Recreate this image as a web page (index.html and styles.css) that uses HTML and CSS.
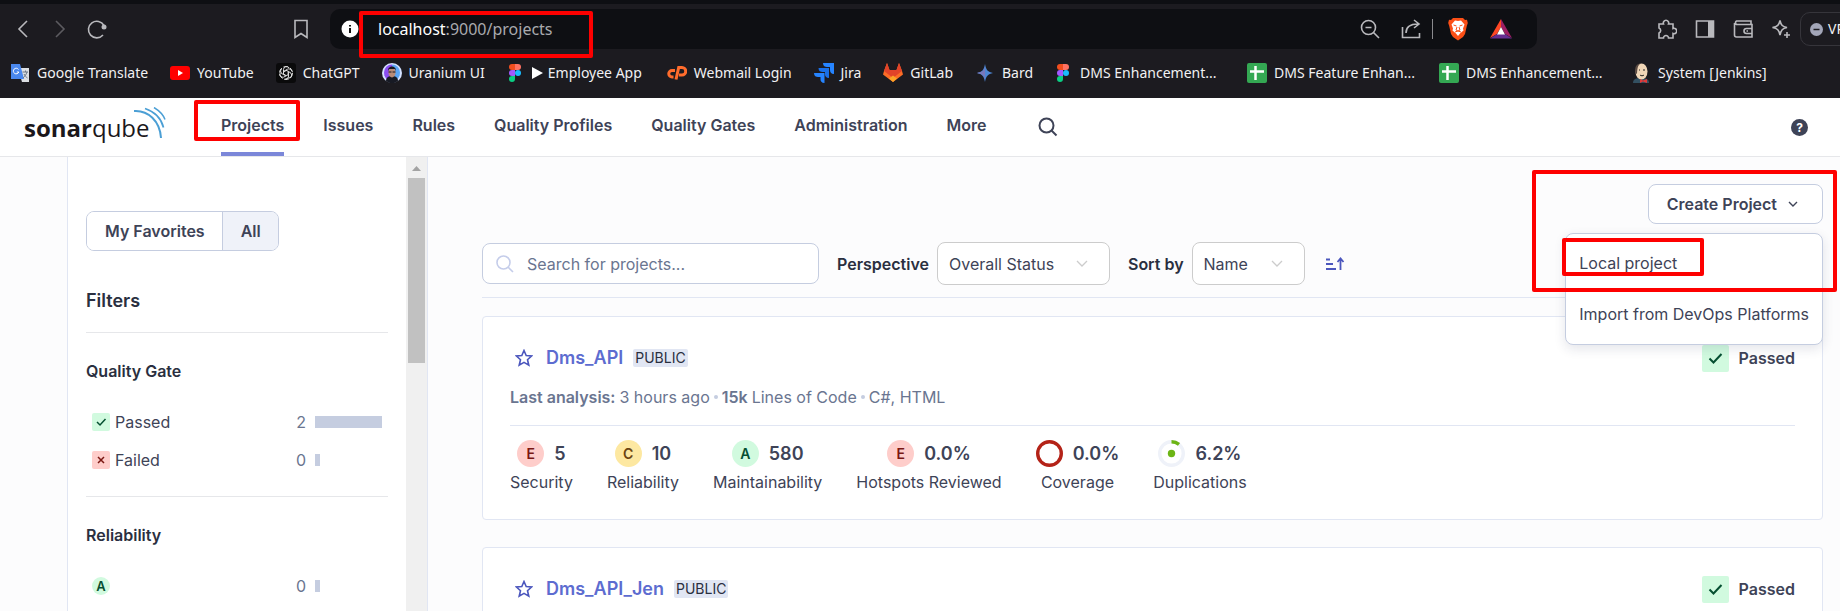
FILE: index.html
```html
<!DOCTYPE html>
<html lang="en">
<head>
<meta charset="utf-8">
<title>Projects</title>
<link rel="stylesheet" href="styles.css">
</head>
<body>
<div class="browser">
  <div class="toolbar">
    <div class="nav-buttons">
      <button class="icon-btn" aria-label="Back"><svg width="20" height="22" viewBox="0 0 20 22"><path d="M14 3 6 11l8 8" class="line"/></svg></button>
      <button class="icon-btn dim" aria-label="Forward"><svg width="20" height="22" viewBox="0 0 20 22"><path d="m6 3 8 8-8 8" class="line"/></svg></button>
      <button class="icon-btn" aria-label="Reload"><svg width="20" height="22" viewBox="0 0 20 22"><path d="M16 17A8.300 8.300 0 1 1 17 7.500" class="line"/><circle cx="17" cy="9" r="2.500" fill="currentColor"/></svg></button>
    </div>
    <button class="icon-btn mark" aria-label="Bookmark"><svg width="16" height="20" viewBox="0 0 16 20"><path d="M2 1.500h12v17l-6-4-6 4z" class="line"/></svg></button>
    <div class="address">
      <svg width="18" height="18" viewBox="0 0 18 18"><circle cx="9" cy="9" r="8.500" fill="#fff"/><path d="M9 8v5M9 5v1.500" stroke="#111" stroke-width="2"/></svg>
      <div class="url marked"><span class="host">localhost</span>:9000/projects</div>
      <div class="address-tools">
        <button class="icon-btn" aria-label="Zoom"><svg width="20" height="20" viewBox="0 0 20 20"><circle cx="8.500" cy="8.500" r="7" class="line"/><path d="M5.500 8.500h6M13.500 13.500l5.500 5.500" class="line"/></svg></button>
        <button class="icon-btn" aria-label="Share"><svg width="20" height="20" viewBox="0 0 20 20"><path d="M1.500 8v10.500h17V14M5 14c0-6 4-9 12-9M13 1l5 4-5 4" class="line"/></svg></button>
        <span class="divider"></span>
        <button class="icon-btn" aria-label="Shields"><svg width="20" height="24" viewBox="0 0 20 24"><path d="M5 1h10l2 2 2-.3.800 3.300-1 3-1.800 8-2 3-5 3.500L5 20l-2-3L1.200 9l-1-3L1 2.700 3 3z" fill="#fb4f16"/><path d="m10 4 3-.5 3.500 4-1.500 4 .5 2-3.500 3L10 19l-2-2.500-3.500-3 .5-2-1.500-4 3.500-4z" fill="#fff"/><path d="m5.500 8 3 1M14.500 8l-3 1M9 10l-1 3 2 1 2-1-1-3M7 15l3-1 3 1" stroke="#fb4f16" fill="none"/></svg></button>
        <button class="icon-btn" aria-label="Rewards"><svg width="24" height="20" viewBox="0 0 24 20"><path d="M12 0 1 19l7-4 4-7z" fill="#ff4724"/><path d="m12 0 11 19-7-4-4-7z" fill="#9e1f63"/><path d="M1 19.500h22L16 15H8z" fill="#662d91"/><path d="m12 8 4 7.500H8z" fill="#fff"/></svg></button>
      </div>
    </div>
    <div class="extensions">
      <button class="icon-btn" aria-label="Extensions"><svg width="20" height="20" viewBox="0 0 20 20"><path d="M2 5h4.500a2.700 2.700 0 1 1 5 0H16v4.500a2.700 2.700 0 1 1 0 5V19h-4.500a2.500 2.500 0 1 0-5 0H2v-5a2.700 2.700 0 0 0 0-5z" class="line"/></svg></button>
      <button class="icon-btn" aria-label="Sidebar"><svg width="20" height="20" viewBox="0 0 20 20"><path d="M1.500 2h17v16h-17z" class="line"/><path d="M13 2h6v16h-6z" fill="currentColor"/></svg></button>
      <button class="icon-btn" aria-label="Wallet"><svg width="20" height="20" viewBox="0 0 20 20"><path d="M18 5.500V2H3.500a2 2 0 0 0 0 3.500H19V18H3.500A2 2 0 0 1 1.500 16V4M19 9.500h-5.500a2 2 0 0 0 0 5H19M13.500 12h1.500" class="line"/></svg></button>
      <button class="icon-btn" aria-label="Assistant"><svg width="20" height="20" viewBox="0 0 20 20"><path d="M9 1.500c1 4.500 2 6 7 7-4.500 1-6 2.500-7 7.500-1-5-2.500-6.500-7.500-7.500 5-1 6.500-2.500 7.500-7zM16 13v6M13 16h6" class="line"/></svg></button>
      <button class="vpn"><svg width="13" height="13" viewBox="0 0 13 13"><circle cx="6.500" cy="6.500" r="6.500" fill="#a3a6b8"/><path d="M3.500 6.500h6" stroke="#1c1b20" stroke-width="1.500"/></svg>VPN</button>
    </div>
  </div>
  <nav class="bookmarks" aria-label="Bookmarks">
    <a href="#"><svg width="20" height="20" viewBox="0 0 20 20"><path d="M8 5h11v14H12z" fill="#dcdfe3"/><path d="M1 1h9l4 15H1z" fill="#4a88ee"/><path d="M8.500 6.500a2.800 2.800 0 1 0 .3 2.500H6.800" class="glyph"/><path d="M12.500 9H18M15.500 7.500V9M17 9c-1 3-2 4-4 6M14 11c1 2 2 3 3.500 4" class="glyph gray"/></svg>Google Translate</a>
    <a href="#"><svg width="20" height="20" viewBox="0 0 20 20"><rect y="3" width="20" height="14" rx="3" fill="#f00"/><path d="m8 7 5 3-5 3z" fill="#fff"/></svg>YouTube</a>
    <a href="#"><svg width="20" height="20" viewBox="0 0 20 20"><rect width="20" height="20" rx="3" fill="#0a0a0b"/><g fill="none" stroke="#ddd"><path id="petal" d="M10 12.500 7.500 11V6.500a3 3 0 0 1 5.500-1.500M7.500 8.500l4-2.300a3 3 0 0 1 4.300 2"/><use href="#petal" transform="rotate(120 10 10)"/><use href="#petal" transform="rotate(240 10 10)"/><circle cx="10" cy="10" r="6.500" stroke-dasharray="5 1.800"/></g></svg>ChatGPT</a>
    <a href="#"><svg width="20" height="20" viewBox="0 0 20 20"><circle cx="10" cy="10" r="10" fill="#d5e2ff"/><path d="M10 1.500a8 8 0 0 0-8 8c0 4 2 6 4 7.500l4-2z" fill="#8a4df0"/><path d="M10 1.500a8 8 0 0 1 8 8c0 4-2 6-4 7.500l-4-2z" fill="#5aa5f5"/><path d="M4 18c0-4 3-5 6-5s6 1 6 5a10 10 0 0 1-12 0z" fill="#171a24"/><ellipse cx="10" cy="9.500" rx="3.500" ry="5" fill="#b98c78"/><path d="M6 8c-.5-6 8.500-6 8 0l-1-2H7z" fill="#181820"/><path d="M6.500 9h3M10.500 9h3" stroke="#181820"/></svg>Uranium UI</a>
    <a href="#" class="narrow"><svg width="14" height="20" viewBox="0 0 14 20"><path d="M7 1H4a3 3 0 0 0 0 6h3z" fill="#f24e1e"/><path d="M7 1h3a3 3 0 0 1 0 6H7z" fill="#ff7262"/><path d="M7 7H4a3 3 0 0 0 0 6h3z" fill="#a259ff"/><circle cx="10" cy="10" r="3" fill="#1abcfe"/><path d="M7 13H4a3 3 0 1 0 3 3z" fill="#0acf83"/></svg><span class="play"></span>Employee App</a>
    <a href="#"><svg width="20" height="20" viewBox="0 0 20 20"><path d="M8 7.500H5a3.200 3.200 0 0 0 0 6.500h1.500M9 16.500l2.700-12H15a3.500 3.500 0 0 1 0 7.500h-3" fill="none" stroke="#ff6c2c" stroke-width="3"/></svg>Webmail Login</a>
    <a href="#"><svg width="20" height="20" viewBox="0 0 20 20"><path d="M9 0h11v11c-3 0-4-2-4-4V4h-3c-2 0-4-1-4-4z" fill="#2684ff"/><path d="M4.500 5h10.500v10c-3 0-4-2-4-3.500V9H8.500c-2 0-4-1-4-4z" fill="#1a70e8"/><path d="M0 10h10.500v10c-3 0-4-2-4-3.500V14H4c-2 0-4-1-4-4z" fill="#2684ff"/></svg>Jira</a>
    <a href="#"><svg width="20" height="20" viewBox="0 0 20 20"><path d="M10 19 0 11.500 1 8l3-8 2.500 7h7L16 0l3 8 1 3.500z" fill="#fc6d26"/><path d="M1 8l3-8 2.500 7h7L16 0l3 8-9 7z" fill="#e24329"/><path d="m10 19-4-3.500 4-3 4 3z" fill="#fca326"/></svg>GitLab</a>
    <a href="#"><svg width="20" height="20" viewBox="0 0 20 20"><path d="M10 1c1 6 3 8 8 9-5 1-7 3-8 9-1-6-3-8-8-9 5-1 7-3 8-9z" fill="#4d87d5"/><path d="M10 4v12c-1-4-3-5-8-6 5-1 7-2 8-6z" fill="#7878bd"/></svg>Bard</a>
    <a href="#" class="narrow clipped"><svg width="14" height="20" viewBox="0 0 14 20"><path d="M7 1H4a3 3 0 0 0 0 6h3z" fill="#f24e1e"/><path d="M7 1h3a3 3 0 0 1 0 6H7z" fill="#ff7262"/><path d="M7 7H4a3 3 0 0 0 0 6h3z" fill="#a259ff"/><circle cx="10" cy="10" r="3" fill="#1abcfe"/><path d="M7 13H4a3 3 0 1 0 3 3z" fill="#0acf83"/></svg>DMS Enhancement...</a>
    <a href="#" class="clipped"><svg width="20" height="20" viewBox="0 0 20 20"><rect width="20" height="20" rx="2" fill="#34a853"/><path d="M3 8.500h14M8.500 3v14" stroke="#fff" stroke-width="2.500"/></svg>DMS Feature Enhan...</a>
    <a href="#" class="clipped"><svg width="20" height="20" viewBox="0 0 20 20"><rect width="20" height="20" rx="2" fill="#34a853"/><path d="M3 8.500h14M8.500 3v14" stroke="#fff" stroke-width="2.500"/></svg>DMS Enhancement...</a>
    <a href="#"><svg width="20" height="20" viewBox="0 0 20 20"><path d="M2 20c0-4 3-5 8-5s8 1 8 5z" fill="#335061"/><ellipse cx="10.500" cy="8.500" rx="6" ry="8" fill="#f0d6b7"/><path d="M4.500 11C3 3 6 0 11 .5 7 1 6.500 4 6 10.500z" fill="#5a4a42"/><path d="M8 7h1M12 7h2M9 12c1 1 3 1 4 0" stroke="#222" fill="none"/><path d="m9 16 3 1.500 4-1.500v4l-4-1.500L9 20z" fill="#e03a3a"/></svg>System [Jenkins]</a>
  </nav>
</div>

<header class="topbar">
  <a class="logo" href="#" aria-label="sonarqube"><span class="logo-text"><b>sonar</b>qube</span><svg width="32" height="32" viewBox="0 0 32 32"><g fill="none" stroke="#4b9fd5"><path d="M0 4c14-1 26 10 27 27" stroke-width="2"/><path d="M11 1.500c9 3 16 9 18.500 19" stroke-width="1.700"/><path d="M20 .5c5 3 9 6.500 11 12" stroke-width="1.500"/></g></svg></a>
  <nav class="main-nav" aria-label="Main">
    <a href="#" class="active marked">Projects</a>
    <a href="#">Issues</a>
    <a href="#">Rules</a>
    <a href="#">Quality Profiles</a>
    <a href="#">Quality Gates</a>
    <a href="#">Administration</a>
    <a href="#">More</a>
  </nav>
  <button class="top-search" aria-label="Search"><svg width="20" height="20" viewBox="0 0 20 20"><circle cx="8.500" cy="8.500" r="7" fill="none" stroke="currentColor" stroke-width="2"/><path d="m13.500 13.500 5 5" stroke="currentColor" stroke-width="2"/></svg></button>
  <button class="help" aria-label="Help">?</button>
</header>

<div class="page">
  <aside class="sidebar">
    <div class="filters">
      <div class="toggle"><button>My Favorites</button><button class="on">All</button></div>
      <h2>Filters</h2>
      <section>
        <h3>Quality Gate</h3>
        <div class="facet"><svg width="18" height="18" viewBox="0 0 18 18"><rect width="18" height="18" rx="2" fill="#d1fadf"/><path d="m5 9 3 3 5.500-6" fill="none" stroke="#054f31" stroke-width="1.500"/></svg><span>Passed</span><span class="count">2</span><span class="track"><i class="bar" style="width:100%"></i></span></div>
        <div class="facet"><svg width="18" height="18" viewBox="0 0 18 18"><rect width="18" height="18" rx="2" fill="#fecdca"/><path d="m6 6 6 6m0-6-6 6" stroke="#7a1712" stroke-width="1.500"/></svg><span>Failed</span><span class="count">0</span><span class="track"><i class="bar" style="width:0"></i></span></div>
      </section>
      <section>
        <h3>Reliability</h3>
        <div class="facet"><span class="rating small a">A</span><span class="count">0</span><span class="track"><i class="bar" style="width:0"></i></span></div>
      </section>
    </div>
    <div class="scrollbar"><svg width="9" height="5" viewBox="0 0 9 5"><path d="M4.500 0 9 5H0z" fill="#a3a3a3"/></svg><div class="thumb"></div></div>
  </aside>

  <main>
    <div class="actions">
      <button class="create">Create Project<svg width="10" height="7" viewBox="0 0 10 7"><path d="m1 1 4 4 4-4" fill="none" stroke="currentColor" stroke-width="1.400"/></svg></button>
      <div class="menu">
        <a href="#" class="marked">Local project</a>
        <a href="#">Import from DevOps Platforms</a>
      </div>
      <div class="callout"></div>
    </div>
    <div class="controls">
      <div class="search"><svg width="18" height="18" viewBox="0 0 18 18"><circle cx="7.500" cy="7.500" r="6.500" fill="none" stroke="#c5cdea" stroke-width="1.600"/><path d="m12 12 5 5" stroke="#c5cdea" stroke-width="1.600"/></svg><input type="text" aria-label="Search for projects" placeholder="Search for projects..."></div>
      <label for="perspective">Perspective</label>
      <div class="select wide"><select id="perspective"><option>Overall Status</option></select><svg width="12" height="8" viewBox="0 0 12 8"><path d="m1 1 5 5 5-5" fill="none" stroke="#ccc" stroke-width="1.300"/></svg></div>
      <label for="sort">Sort by</label>
      <div class="select"><select id="sort"><option>Name</option></select><svg width="12" height="8" viewBox="0 0 12 8"><path d="m1 1 5 5 5-5" fill="none" stroke="#ccc" stroke-width="1.300"/></svg></div>
      <button class="order" aria-label="Sort order"><svg width="20" height="14" viewBox="0 0 20 14"><path d="M1 2.500h4M1 7h7M1 12h10M15.500 13V2M12.500 5l3-3.500 3 3.500" fill="none" stroke="#4b56bd" stroke-width="1.800"/></svg></button>
    </div>

    <article class="card">
      <div class="card-head">
        <button class="star" aria-label="Favorite"><svg width="18" height="18" viewBox="0 0 18 18"><path d="m9 1.500 2.200 5 5.300.5-4 3.700 1.300 5.500L9 13.400l-4.800 2.800 1.300-5.500-4-3.700 5.300-.5z" fill="none" stroke="#4b56bd" stroke-width="1.600"/></svg></button>
        <a class="name" href="#">Dms_API</a><span class="badge">PUBLIC</span>
        <span class="gate"><svg width="27" height="27" viewBox="0 0 27 27"><rect width="27" height="27" rx="2" fill="#d1fadf"/><path d="m7.500 13.500 4 4 8-8.500" fill="none" stroke="#054f31" stroke-width="2"/></svg>Passed</span>
      </div>
      <div class="meta"><b>Last analysis:</b> 3 hours ago <i></i> <b>15k</b> Lines of Code <i></i> C#, HTML</div>
      <div class="measures">
        <div><div class="value"><span class="rating e">E</span>5</div>Security</div>
        <div><div class="value"><span class="rating c">C</span>10</div>Reliability</div>
        <div><div class="value"><span class="rating a">A</span>580</div>Maintainability</div>
        <div><div class="value"><span class="rating e">E</span>0.0%</div>Hotspots Reviewed</div>
        <div><div class="value"><svg width="27" height="27" viewBox="0 0 27 27"><circle cx="13.500" cy="13.500" r="11.800" fill="none" stroke="#b42318" stroke-width="3.400"/></svg>0.0%</div>Coverage</div>
        <div><div class="value"><svg width="27" height="27" viewBox="0 0 27 27"><circle cx="13.500" cy="13.500" r="11.800" fill="none" stroke="#eff2f9" stroke-width="3.400"/><path d="M13.500 1.700a11.800 11.800 0 0 1 7.500 2.700" fill="none" stroke="#6cb515" stroke-width="3.400"/><circle cx="13.500" cy="13.500" r="3.700" fill="#6cb515"/></svg>6.2%</div>Duplications</div>
      </div>
    </article>

    <article class="card">
      <div class="card-head">
        <button class="star" aria-label="Favorite"><svg width="18" height="18" viewBox="0 0 18 18"><path d="m9 1.500 2.200 5 5.300.5-4 3.700 1.300 5.500L9 13.400l-4.800 2.800 1.300-5.500-4-3.700 5.300-.5z" fill="none" stroke="#4b56bd" stroke-width="1.600"/></svg></button>
        <a class="name" href="#">Dms_API_Jen</a><span class="badge">PUBLIC</span>
        <span class="gate"><svg width="27" height="27" viewBox="0 0 27 27"><rect width="27" height="27" rx="2" fill="#d1fadf"/><path d="m7.500 13.500 4 4 8-8.500" fill="none" stroke="#054f31" stroke-width="2"/></svg>Passed</span>
      </div>
    </article>
  </main>
</div>
</body>
</html>
```
FILE: styles.css
```css
*, *::after { box-sizing: border-box; }
body {
  margin: 0;
  height: 100vh;
  overflow: hidden;
  display: flex;
  flex-direction: column;
  font: 16px/24px Inter, "Liberation Sans", sans-serif;
  color: #3e4357;
  background: #fcfcfd;
}
button, input, select { font: inherit; color: inherit; }
button { cursor: pointer; }
a { color: inherit; text-decoration: none; }
svg { display: block; flex: none; }
.line { fill: none; stroke: currentColor; stroke-width: 1.6; }
.glyph { fill: none; stroke: #fff; stroke-width: 1; }
.gray { stroke: #6b7785; }

/* Elements outlined in red */
.marked { position: relative; }
.marked::after, .callout {
  content: "";
  position: absolute;
  border: 4px solid #fe0000;
  border-radius: 2px;
  pointer-events: none;
  z-index: 5;
}

/* Browser chrome */
.browser {
  flex: none;
  background: #1c1b20;
  border-top: 4px solid #0e0f13;
  color: #f1f1f3;
  font-family: "Segoe UI", "Noto Sans", sans-serif;
  overflow: hidden;
}
.toolbar { display: flex; align-items: center; height: 50px; padding-left: 13px; }
.icon-btn { display: flex; padding: 0; border: 0; background: none; color: #b9b9bd; }
.dim { color: #5c5b60; }
.nav-buttons { display: flex; gap: 17px; width: 280px; }
.mark { width: 37px; }
.address {
  flex: 1;
  display: flex;
  align-items: center;
  height: 40px;
  padding: 0 24px 0 11px;
  border-radius: 10px;
  background: #0e0f13;
}
.url { margin-left: 19px; font-size: 16px; color: #a9aaae; }
.url.marked::after { inset: -6px -40px -17px -19px; }
.host { color: #fff; }
.address-tools { display: flex; align-items: center; gap: 21px; margin-left: auto; }
.divider { width: 1px; height: 20px; margin: 0 -6px 0 -10px; background: #8a8a8e; }
.extensions { flex: none; display: flex; align-items: center; gap: 18px; width: 303px; padding-left: 120px; overflow: hidden; }
.vpn {
  flex: none;
  display: flex;
  align-items: center;
  gap: 5px;
  height: 34px;
  width: 90px;
  margin-left: -9px;
  padding: 0 9px;
  border: 1px solid #36353b;
  border-radius: 10px;
  background: none;
  font-size: 14px;
}
.bookmarks { display: flex; gap: 22px; height: 44px; padding: 0 0 6px 10px; align-items: center; font-size: 14px; white-space: nowrap; }
.bookmarks a { flex: none; display: flex; align-items: center; gap: 7px; }
.bookmarks .narrow { gap: 10px; padding: 0 3px 0 1px; }
.bookmarks .clipped { width: 170px; }
.play { margin-right: -5px; border-left: 11px solid #fff; border-top: 6px solid transparent; border-bottom: 6px solid transparent; }

/* Application header */
.topbar {
  flex: none;
  display: flex;
  height: 59px;
  padding: 0 24px;
  background: #fff;
  border-bottom: 1px solid #e6e7ea;
}
.logo { display: flex; width: 197px; padding-top: 9px; }
.logo-text { padding-top: 4px; font: 24px/34px "Open Sans", sans-serif; color: #1b171b; }
.logo svg { margin-left: -16px; }
.main-nav { display: flex; gap: 39px; font-weight: 600; }
.main-nav a { padding-top: 15px; }
.main-nav .active { border-bottom: 4px solid #7b87d9; }
.main-nav .marked::after { inset: 2px -16px 11px -27px; }
.top-search { padding: 0 52px; border: 0; background: none; }
.help {
  align-self: center;
  width: 17px;
  height: 17px;
  margin: 0 8px 0 auto;
  padding: 0;
  border: 0;
  border-radius: 50%;
  background: #3e4357;
  color: #fff;
  font-size: 12px;
  font-weight: 700;
  line-height: 17px;
}

.page { flex: 1; min-height: 0; display: flex; }

/* Filters */
.sidebar { flex: none; display: flex; margin-left: 67px; width: 361px; background: #fff; border: solid #e1e6f3; border-width: 0 1px; }
.filters { flex: 1; padding: 54px 18px 0; overflow: hidden; }
.toggle { display: inline-flex; border: 1px solid #c5cde0; border-radius: 8px; overflow: hidden; }
.toggle button { height: 38px; padding: 0 17px 0 18px; border: 0; background: #fff; font-weight: 600; }
.toggle .on { border-left: 1px solid #c5cde0; background: #eff2f9; }
h2, h3 { margin: 0; font-weight: 600; color: #2a2f40; }
h2 { margin-top: 38px; padding-bottom: 19px; font-size: 18px; }
h3 { padding: 26px 0 20px; font-size: 16px; }
section { border-top: 1px solid #e6e7ea; padding-bottom: 17px; }
.facet { display: flex; align-items: center; gap: 5px; height: 38px; padding: 0 6px; }
.count { margin: 0 4px 0 auto; color: #6a7590; }
.track { width: 67px; }
.bar { display: block; min-width: 5px; height: 12px; background: #c5cde0; }
.scrollbar { width: 21px; padding: 9px 2px 0; background: #f0f0f0; }
.scrollbar svg { margin: 0 auto; }
.thumb { height: 185px; margin-top: 7px; background: #c1c1c1; }

/* Project list */
main { flex: 1; min-width: 0; padding: 27px 17px 0 54px; overflow: hidden; }
.actions { position: relative; display: flex; justify-content: flex-end; }
.create {
  display: flex;
  align-items: center;
  gap: 11px;
  height: 40px;
  padding: 0 24px 0 18px;
  border: 1px solid #c5cde0;
  border-radius: 8px;
  background: #fff;
  font-weight: 600;
}
.menu {
  position: absolute;
  top: 49px;
  right: 0;
  z-index: 2;
  padding: 4px 13px;
  border: 1px solid #c5cde0;
  border-radius: 8px;
  background: #fff;
  box-shadow: 0 4px 12px rgba(30, 40, 80, .12);
}
.menu a { display: block; line-height: 51px; }
.menu .marked::after { top: 0; left: -17px; width: 142px; height: 38px; }
.callout { top: -14px; right: -14px; width: 305px; height: 122px; }
.controls {
  display: flex;
  align-items: center;
  padding: 18px 0 12px;
  border-bottom: 1px solid #e1e6f3;
  white-space: nowrap;
}
.controls label { margin: 0 8px 0 18px; font-weight: 600; color: #2a2f40; }
.search { display: flex; align-items: center; width: 337px; height: 41px; padding-left: 13px; border: 1px solid #c5cde0; border-radius: 8px; background: #fff; }
.search input { flex: 1; min-width: 0; margin-left: 13px; padding: 0; border: 0; outline: 0; background: none; }
.search input::placeholder { color: #6a7590; opacity: 1; }
.select { display: flex; align-items: center; width: 113px; height: 43px; padding-right: 21px; border: 1px solid #ccc; border-radius: 8px; background: #fff; }
.wide { width: 173px; }
.select select { flex: 1; min-width: 0; height: 100%; padding: 0 0 0 11px; border: 0; background: none; appearance: none; }
.order { margin-left: 14px; border: 0; background: none; }

.card { margin: 18px 0 27px; padding: 27px; height: 204px; border: 1px solid #e1e6f3; border-radius: 4px; background: #fff; }
.card-head { display: flex; align-items: center; height: 28px; }
.star { padding: 0 13px 0 5px; border: 0; background: none; }
.name { font-size: 18px; font-weight: 600; color: #5d6cd0; }
.badge { margin-left: 10px; padding: 0 2px; border-radius: 2px; background: #e1e6f3; font-size: 14px; line-height: 18px; color: #2a2f40; }
.gate { display: flex; align-items: center; gap: 10px; margin-left: auto; font-weight: 600; }
.meta { display: flex; align-items: center; gap: 4px; padding: 13px 0 16px; color: #6a7590; }
.meta b { font-weight: 600; }
.meta i { width: 4px; height: 4px; border-radius: 50%; background: #c5cde0; }
.measures { display: flex; gap: 34px; padding-top: 14px; border-top: 1px solid #e1e6f3; text-align: center; }
.value { display: flex; justify-content: center; align-items: center; gap: 10px; height: 27px; margin-bottom: 3px; font-size: 18px; font-weight: 600; }
.rating { width: 27px; border-radius: 50%; font-size: 14px; font-weight: 600; line-height: 27px; text-align: center; }
.small { width: 18px; line-height: 18px; font-size: 13px; }
.a { background: #d1fadf; color: #054f31; }
.c { background: #fde8a1; color: #6b4410; }
.e { background: #fecdca; color: #7a1712; }
```
